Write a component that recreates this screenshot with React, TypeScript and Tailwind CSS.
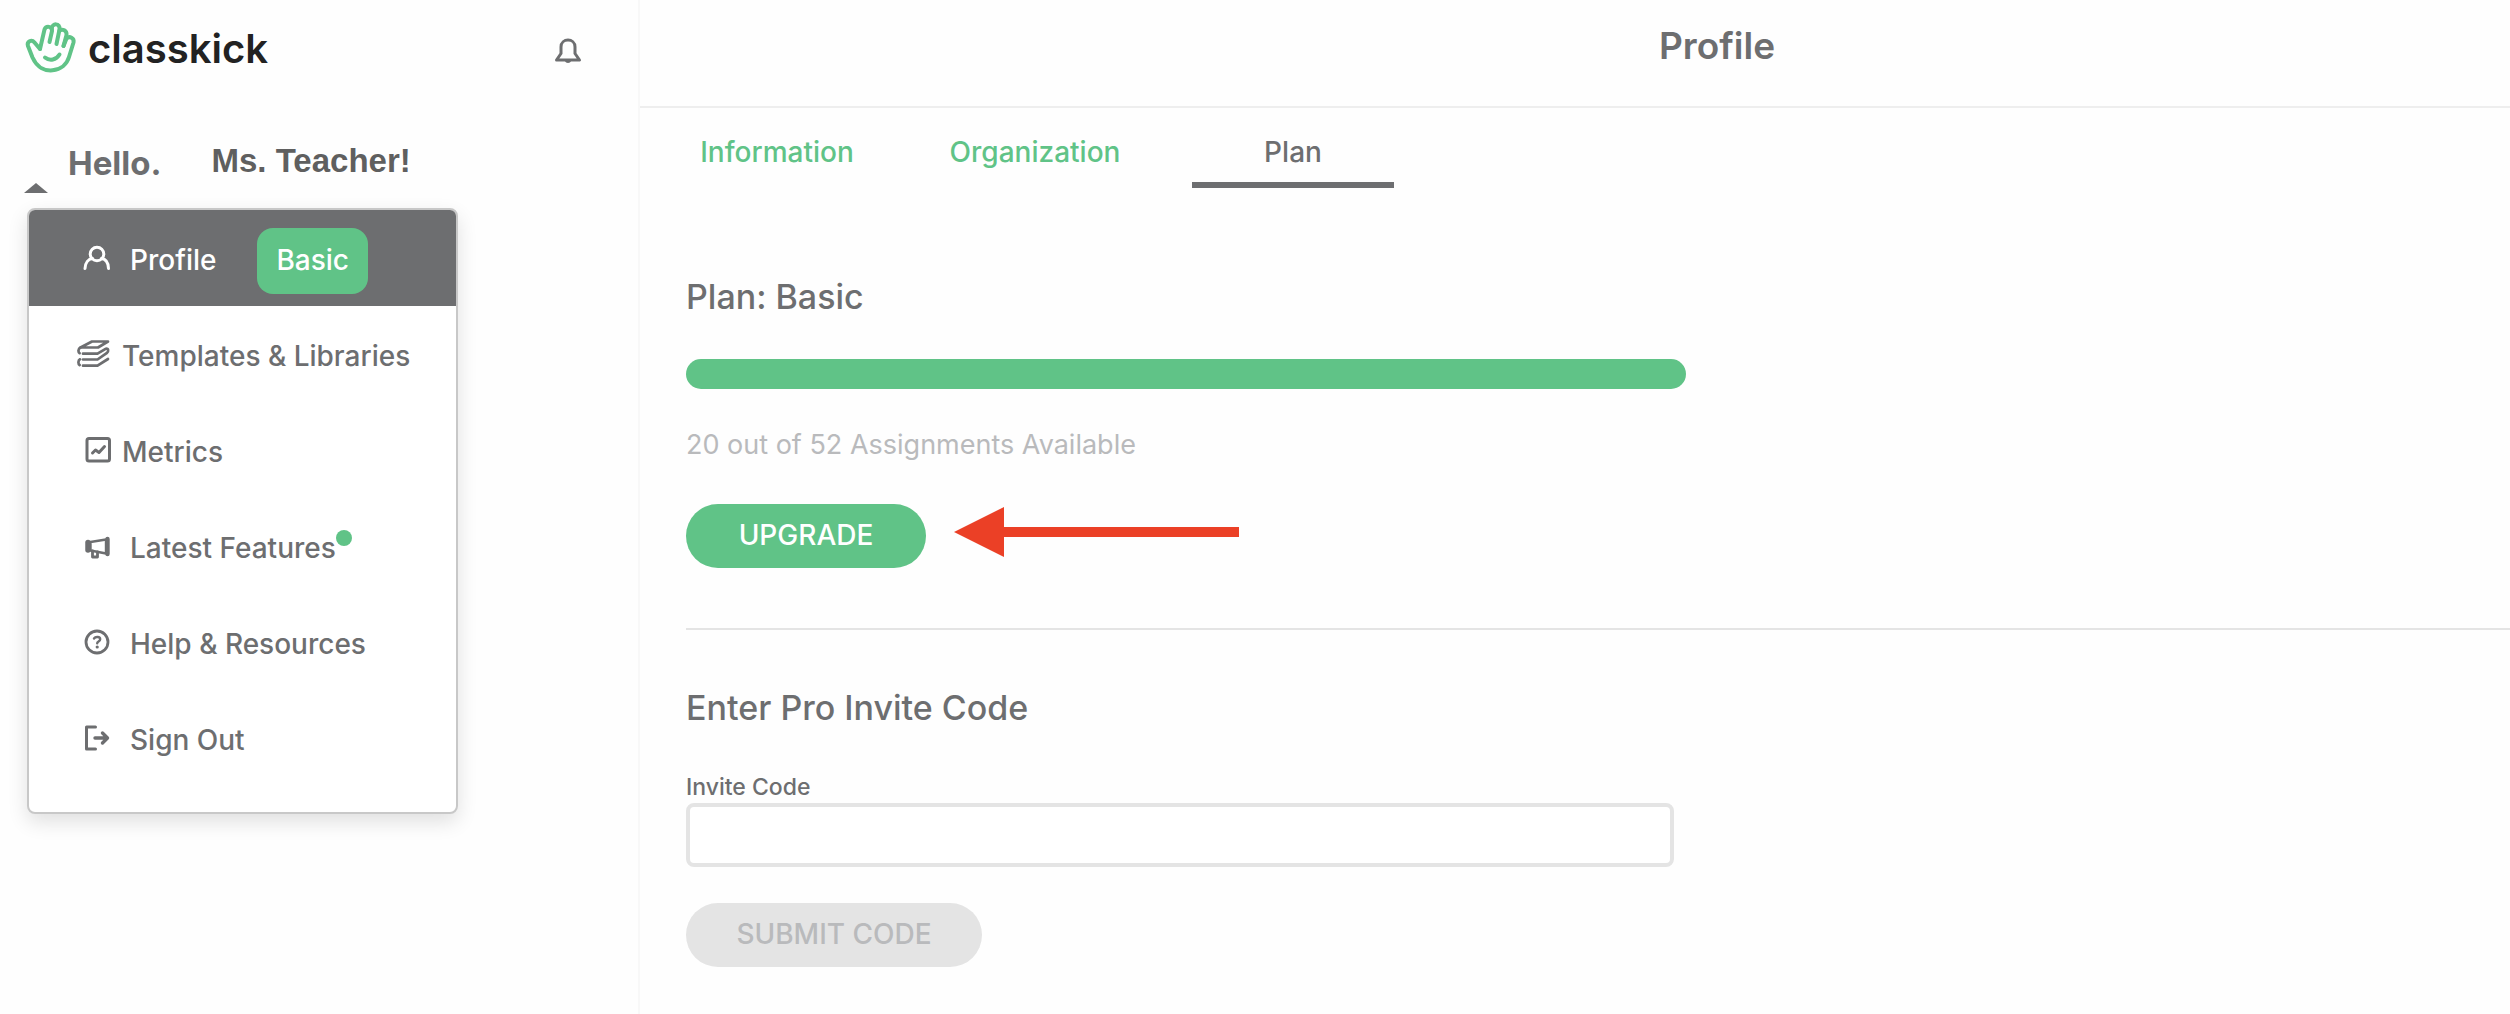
import type { ReactNode } from 'react';

const menuItems: { label: string; icon: ReactNode; active?: boolean; tight?: boolean; dot?: boolean }[] = [
    { label: 'Profile', icon: <ProfileIcon />, active: true },
    { label: 'Templates & Libraries', icon: <BooksIcon />, tight: true },
    { label: 'Metrics', icon: <MetricsIcon />, tight: true },
    { label: 'Latest Features', icon: <MegaphoneIcon />, dot: true },
    { label: 'Help & Resources', icon: <HelpIcon /> },
    { label: 'Sign Out', icon: <SignOutIcon /> },
];

const tabs = ['Information', 'Organization', 'Plan'];

function HandLogo() {
    return (
        <svg className="w-[54px] h-[54px]" viewBox="0 0 54 54" fill="none" stroke="#60c387" strokeWidth="4" strokeLinecap="round" strokeLinejoin="round" aria-hidden="true">
            <path d="M16 29 L10.500 22.500 C7.500 19 2.500 21.500 4 26 L8.500 37.500 C13 47.500 21 51 28.500 50.300 C37 49.500 43 44 45 37 L49.500 22.500 C50.500 18 45.500 15.500 42.500 18.500 L39.500 26" />
            <path d="M16 29 L20.500 9.500 C22 5.500 28.500 6 28 11 L25.500 22" />
            <path d="M27.500 9 C28 2.500 36.500 3 35.500 9.500 L32.500 24" />
            <path d="M35.500 10.500 C38.500 8.500 43 10.500 42.500 15 L39.500 26" />
            <path d="M21 37.500 C26 41.500 32 40 35.500 34.500" />
        </svg>
    );
}

function BellIcon() {
    return (
        <svg className="w-7 h-7" viewBox="0 0 28 28" fill="none" stroke="#6d6e70" strokeWidth="3" strokeLinejoin="round" aria-hidden="true">
            <path d="M2.500 23 L7 16.500 V10 C7 0.800 21 0.800 21 10 V16.500 L25.500 23 Z" />
            <path d="M11 24 H17 C16.500 26.500 11.500 26.500 11 24 Z" fill="#6d6e70" stroke="none" />
        </svg>
    );
}

function ProfileIcon() {
    return (
        <svg className="w-9 h-9" viewBox="0 0 36 36" fill="none" stroke="currentColor" strokeWidth="3" strokeLinecap="round" aria-hidden="true">
            <circle cx="20" cy="14" r="6.800" />
            <path d="M8 28.500 C8.300 22.500 11.500 19 15.500 18.600 M31.500 28.500 C31.200 22.500 28.500 19 24.500 18.600" />
        </svg>
    );
}

function BooksIcon() {
    return (
        <svg className="w-9 h-9" viewBox="0 0 36 36" fill="none" stroke="currentColor" strokeWidth="2.700" strokeLinecap="round" strokeLinejoin="round" aria-hidden="true">
            <path d="M3.500 11.500 L15 5.500 H31 L21 11.500 Z" />
            <path d="M3.500 11.500 C1 12.500 1 16.500 2.600 17.200" />
            <path d="M6 17.700 H20.500 L29 12.700 C31.500 12 31.800 15.500 30 16.800 L20.500 23.500 H6" />
            <path d="M3 23.300 C1 24.300 1 28 2.600 29" />
            <path d="M6 29.700 H20.500 L31 23" />
        </svg>
    );
}

function MetricsIcon() {
    return (
        <svg className="w-9 h-9" viewBox="0 0 36 36" fill="none" stroke="currentColor" strokeWidth="3" strokeLinecap="round" strokeLinejoin="round" aria-hidden="true">
            <rect x="10" y="6.500" width="22.500" height="22.500" rx="2" />
            <path d="M15.500 21 L18.500 18 L22 20.500 L27.500 14.500" />
        </svg>
    );
}

function MegaphoneIcon() {
    return (
        <svg className="w-9 h-9" viewBox="0 0 36 36" fill="none" stroke="currentColor" strokeWidth="3" strokeLinecap="round" strokeLinejoin="round" aria-hidden="true">
            <path d="M13.500 14 L29 11.500 V25.500 L13.500 22.500 Z" strokeWidth="2.400" />
            <path d="M30.500 11 V26" strokeWidth="4.400" />
            <path d="M11 14.500 V22" strokeWidth="5.500" />
            <path d="M15.500 23 V29 H20.500 V24" strokeWidth="2.800" />
        </svg>
    );
}

function HelpIcon() {
    return (
        <svg className="w-9 h-9" viewBox="0 0 36 36" fill="none" stroke="currentColor" strokeWidth="2.800" strokeLinecap="round" strokeLinejoin="round" aria-hidden="true">
            <circle cx="20" cy="18" r="11" />
            <path d="M17 14.500 C18.500 12.300 23.200 12.500 23.200 15.300 C23.200 17.500 20.200 17.500 20.200 19.200" strokeWidth="2.400" />
            <circle cx="20.200" cy="23" r="1.600" fill="currentColor" stroke="none" />
        </svg>
    );
}

function SignOutIcon() {
    return (
        <svg className="w-9 h-9" viewBox="0 0 36 36" fill="none" stroke="currentColor" strokeWidth="3" strokeLinecap="round" strokeLinejoin="round" aria-hidden="true">
            <path d="M18.500 7 H9.500 V29 H18.500" />
            <path d="M18 18 H30 M25.500 13 L30.500 18 L25.500 23" strokeWidth="3.400" />
        </svg>
    );
}

function Sidebar() {
    return (
        <aside className="w-[638px] shrink-0">
            <div className="flex items-center justify-between pl-6 pr-[56px] pt-5">
                <a href="#" className="flex items-center gap-[10px] text-[40px] leading-[50px] font-semibold text-[#222]">
                    <HandLogo />
                    <span className="pt-1">classkick</span>
                </a>
                <button type="button" aria-label="Notifications" className="pt-2 cursor-pointer">
                    <BellIcon />
                </button>
            </div>

            <div className="flex items-center gap-[50px] pl-[68px] mt-[67px] h-10">
                <span className="text-[33px] leading-10 font-bold text-[#6d6e70] pt-1">Hello.</span>
                <span className="text-[33px] leading-10 font-bold text-[#5f5f5f] font-['Liberation_Sans',Arial,sans-serif]">Ms. Teacher!</span>
            </div>
            <svg className="w-6 h-[10px] ml-6 mt-[2px]" viewBox="0 0 24 10" aria-hidden="true">
                <path d="M12 0 L24 10 H0 Z" fill="#6d6e70" />
            </svg>

            <nav className="w-[431px] ml-[27px] mt-[15px] pb-[26px] bg-white border-2 border-[#c8c8c8] rounded-lg overflow-hidden shadow-[0_8px_20px_rgba(0,0,0,0.12)]">
                {menuItems.map((item) => (
                    <a
                        key={item.label}
                        href="#"
                        className={`flex items-center h-24 pl-12 text-[28px] leading-8 font-medium whitespace-nowrap ${item.active ? 'bg-[#6d6e70] text-white' : 'text-[#6d6e70]'} ${item.tight ? 'gap-[9px]' : 'gap-[17px]'}`}
                    >
                        {item.icon}
                        <span className="relative pt-1">
                            {item.label}
                            {item.dot && <span className="absolute left-full top-[2px] w-4 h-4 rounded-full bg-[#60c387]"></span>}
                        </span>
                        {item.active && (
                            <span className="ml-6 mt-[6px] px-[19px] pb-[2px] h-[66px] flex items-center rounded-2xl bg-[#60c387]">Basic</span>
                        )}
                    </a>
                ))}
            </nav>
        </aside>
    );
}

function PlanSection() {
    return (
        <section className="pt-[89px] pb-[60px] border-b-2 border-[#e4e4e4]">
            <h2 className="text-[34px] leading-10 font-medium">Plan: Basic</h2>
            <div className="w-full max-w-[1000px] h-[30px] mt-[42px] rounded-full bg-[#60c387]"></div>
            <p className="text-[27px] leading-8 font-normal text-[#b9babc] mt-10">20 out of 52 Assignments Available</p>
            <div className="flex items-center gap-7 mt-[43px]">
                <button type="button" className="w-[240px] h-16 pb-[2px] rounded-full bg-[#60c387] text-white text-[28px] leading-8 font-medium cursor-pointer">
                    UPGRADE
                </button>
                <svg className="w-[285px] h-[50px] mb-2" viewBox="0 0 285 50" fill="#eb4026" aria-hidden="true">
                    <path d="M0 25 L50 0 V20 H285 V30 H50 V50 Z" />
                </svg>
            </div>
        </section>
    );
}

function InviteForm() {
    return (
        <form className="pt-[58px]" onSubmit={(e) => e.preventDefault()}>
            <h2 className="text-[34px] leading-10 font-medium">Enter Pro Invite Code</h2>
            <label htmlFor="invite-code" className="block text-[23px] leading-7 font-medium mt-[45px]">
                Invite Code
            </label>
            <input
                id="invite-code"
                type="text"
                className="block w-full max-w-[988px] h-16 px-4 mt-[2px] text-[28px] bg-white border-4 border-[#e4e4e4] rounded-lg outline-none focus:border-[#60c387]"
            />
            <button type="submit" disabled className="w-[296px] h-16 pb-[2px] mt-9 rounded-full bg-[#e4e4e4] text-[#b9babc] text-[28px] leading-8 font-medium">
                SUBMIT CODE
            </button>
        </form>
    );
}

export default function App() {
    return (
        <div className="min-h-screen flex bg-[#fefefe] text-[#6d6e70] font-['Inter',Arial,sans-serif]">
            <Sidebar />

            <main className="flex-1 min-w-0 border-l-2 border-[#f8f8f8]">
                <header className="h-[108px] pt-6 pl-[284px] border-b-2 border-[#eeeeee]">
                    <h1 className="text-center text-[37px] leading-[44px] font-semibold">Profile</h1>
                </header>

                <div className="flex pl-2" role="tablist">
                    {tabs.map((tab) => (
                        <button
                            key={tab}
                            type="button"
                            role="tab"
                            aria-selected={tab === 'Plan'}
                            className={`w-[202px] h-20 mx-7 pt-[14px] text-[28px] leading-8 font-medium border-b-[6px] cursor-pointer ${tab === 'Plan' ? 'border-[#6d6e70]' : 'border-transparent text-[#60c387]'}`}
                        >
                            {tab}
                        </button>
                    ))}
                </div>

                <div className="pl-[46px]">
                    <PlanSection />
                    <InviteForm />
                </div>
            </main>
        </div>
    );
}
